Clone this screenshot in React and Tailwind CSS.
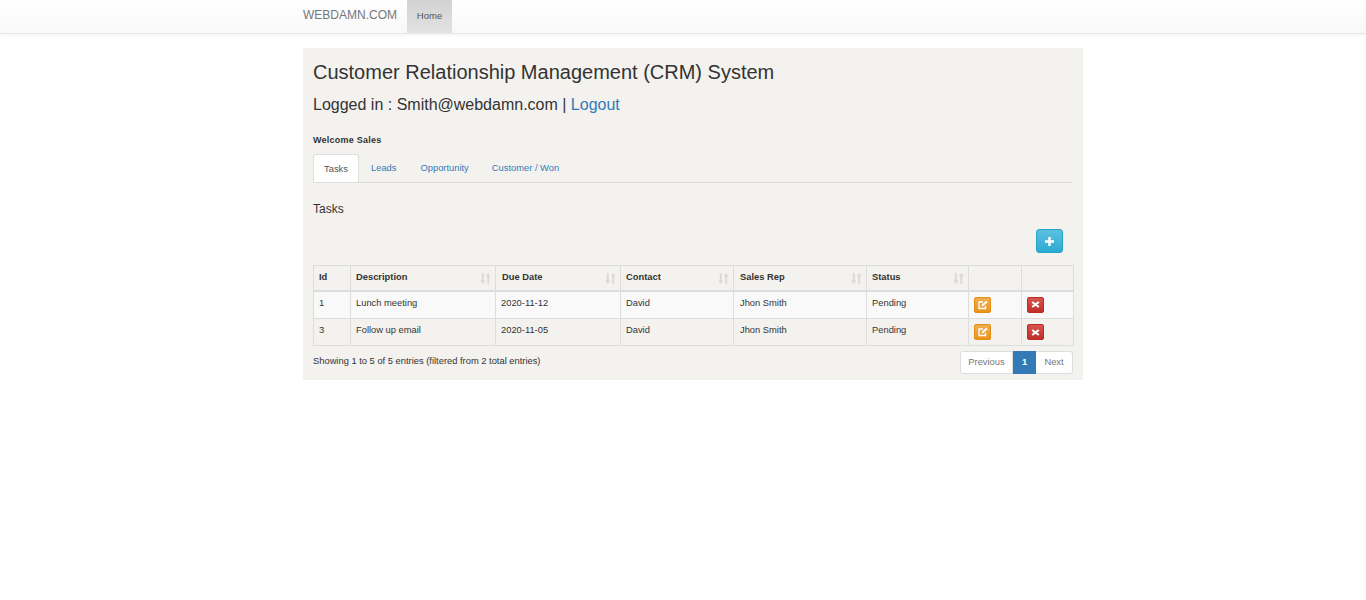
const columns = [
  { label: 'Id', width: 'w-[37px]', pad: 'pl-[5px]' },
  { label: 'Description', width: 'w-[145px]', pad: 'pl-[5px]', sort: true },
  { label: 'Due Date', width: 'w-[125px]', pad: 'pl-[6px]', sort: true },
  { label: 'Contact', width: 'w-[113px]', pad: 'pl-[5px]', sort: true },
  { label: 'Sales Rep', width: 'w-[133px]', pad: 'pl-[6px]', sort: true },
  { label: 'Status', width: 'w-[102px]', pad: 'pl-[5px]', sort: true },
  { label: '', width: 'w-[53px]', pad: 'pl-[5px]' },
  { label: '', width: 'w-[52px]', pad: 'pl-[5px]' },
];

const tasks = [
  { id: 1, description: 'Lunch meeting', due: '2020-11-12', contact: 'David', rep: 'Jhon Smith', status: 'Pending', row: 'h-[28px] bg-[#f9f9f9]', cell: 'pb-[4px]' },
  { id: 3, description: 'Follow up email', due: '2020-11-05', contact: 'David', rep: 'Jhon Smith', status: 'Pending', row: 'h-[27px] bg-[#f3f2ef]', cell: 'pb-[3px]' },
];

function SortIcon() {
  return (
    <svg className="absolute right-[4px] top-[7px] text-[#dcdad6]" width="11" height="11" viewBox="0 0 11 11" fill="currentColor">
      <path d="M1.8 0h2v7.5h1.6L2.8 11 .2 7.5h1.6z" />
      <path d="M7.2 11h2V3.5h1.6L8.2 0 5.6 3.5h1.6z" />
    </svg>
  );
}

function PlusIcon() {
  return (
    <svg width="9" height="9" viewBox="0 0 10 10" fill="currentColor">
      <path d="M3.6 0h2.8v3.6H10v2.8H6.4V10H3.6V6.4H0V3.6h3.6z" />
    </svg>
  );
}

function EditIcon() {
  return (
    <svg width="10" height="10" viewBox="0 0 10 10" fill="none" stroke="currentColor">
      <path d="M7.5 6v2.5h-6.5v-6.5h4" strokeWidth="1.4" />
      <path d="M3.8 6.2l.4-1.6 4-3.6 1.2 1.2-4 3.6z" fill="currentColor" strokeWidth="0.5" />
    </svg>
  );
}

function RemoveIcon() {
  return (
    <svg width="9" height="7" viewBox="0 0 9 7" fill="none" stroke="currentColor" strokeWidth="2.1">
      <path d="M1.2 1l6.6 5M7.8 1L1.2 6" />
    </svg>
  );
}

function App() {
  return (
    <div className="min-h-[600px] bg-white font-['Liberation_Sans',Arial,sans-serif] text-[#333]">
      <nav className="h-[34px] bg-gradient-to-b from-white to-[#f8f8f8] border-b border-[#e7e7e7] shadow-[0_1px_4px_rgba(0,0,0,0.06)]">
        <div className="w-[780px] ml-[303px] flex h-full">
          <a className="text-[12px] leading-[31px] text-[#777] pr-[10px]">WEBDAMN.COM</a>
          <a className="w-[45px] h-[33px] text-center text-[9.5px] leading-[31px] text-[#555] bg-gradient-to-b from-[#d3d3d3] to-[#e2e2e2]">Home</a>
        </div>
      </nav>

      <div className="w-[780px] ml-[303px] mt-[14px] h-[332px] bg-[#f3f2ef] px-[10px]">
        <h2 className="pt-[12px] text-[20px] leading-[24px] text-[#333]">Customer Relationship Management (CRM) System</h2>
        <h3 className="mt-[11px] text-[16px] leading-[20px]">
          Logged in : Smith@webdamn.com | <a className="text-[#337ab7]">Logout</a>
        </h3>
        <p className="mt-[19px] text-[9px] leading-[12px] font-bold tracking-[0.25px]">Welcome Sales</p>

        <div className="mt-[8px] flex h-[29px] border-b border-[#ddd] text-[9.35px] text-[#337ab7]">
          <a className="h-[28px] w-[46px] text-center leading-[28px] text-[#555] bg-white border border-[#ddd] border-b-0 rounded-t-[3px]">Tasks</a>
          <a className="ml-[12px] leading-[28px]">Leads</a>
          <a className="ml-[24px] leading-[28px]">Opportunity</a>
          <a className="ml-[23px] leading-[28px]">Customer / Won</a>
        </div>

        <h4 className="mt-[19px] text-[12px] leading-[14px]">Tasks</h4>

        <div className="mt-[13px] flex justify-end pr-[10px]">
          <button className="w-[27px] h-[24px] flex items-center justify-center rounded-[3px] border border-[#28a4c9] bg-gradient-to-b from-[#5bc0de] to-[#2aabd2] text-white">
            <PlusIcon />
          </button>
        </div>

        <table className="mt-[12px] w-[760px] table-fixed border-collapse text-[9.35px] text-[#333]">
          <thead>
            <tr className="h-[25px]">
              {columns.map((col, i) => (
                <th key={i} className={`${col.width} ${col.pad} relative border border-[#ddd] border-b-2 pr-[5px] pb-[1px] text-left font-bold`}>
                  {col.label}
                  {col.sort && <SortIcon />}
                </th>
              ))}
            </tr>
          </thead>
          <tbody>
            {tasks.map(task => (
              <tr key={task.id} className={task.row}>
                <td className={`border border-[#ddd] pl-[5px] pr-[5px] ${task.cell}`}>{task.id}</td>
                <td className={`border border-[#ddd] pl-[5px] pr-[5px] ${task.cell}`}>{task.description}</td>
                <td className={`border border-[#ddd] pl-[5px] pr-[5px] ${task.cell}`}>{task.due}</td>
                <td className={`border border-[#ddd] pl-[5px] pr-[5px] ${task.cell}`}>{task.contact}</td>
                <td className={`border border-[#ddd] pl-[6px] pr-[5px] ${task.cell}`}>{task.rep}</td>
                <td className={`border border-[#ddd] pl-[5px] pr-[5px] ${task.cell}`}>{task.status}</td>
                <td className="border border-[#ddd] px-[5px]">
                  <button className="w-[17px] h-[16px] flex items-center justify-center rounded-[2px] border border-[#e38d13] bg-gradient-to-b from-[#f0ad4e] to-[#eb9316] text-white">
                    <EditIcon />
                  </button>
                </td>
                <td className="border border-[#ddd] px-[5px]">
                  <button className="w-[17px] h-[16px] flex items-center justify-center rounded-[2px] border border-[#b92c28] bg-gradient-to-b from-[#d9534f] to-[#c12e2a] text-white">
                    <RemoveIcon />
                  </button>
                </td>
              </tr>
            ))}
          </tbody>
        </table>

        <div className="mt-[5px] flex justify-between">
          <p className="mt-[4px] text-[9.35px] leading-[12px]">Showing 1 to 5 of 5 entries (filtered from 2 total entries)</p>
          <div className="flex h-[23px] text-[9.35px] leading-[21px]">
            <a className="w-[53px] text-center text-[#777] bg-white border border-[#ddd] rounded-l-[3px]">Previous</a>
            <a className="w-[23px] text-center text-white font-bold bg-[#337ab7] border border-[#337ab7]">1</a>
            <a className="w-[37px] text-center text-[#777] bg-white border border-l-0 border-[#ddd] rounded-r-[3px]">Next</a>
          </div>
        </div>
      </div>
    </div>
  );
}

export default App;
